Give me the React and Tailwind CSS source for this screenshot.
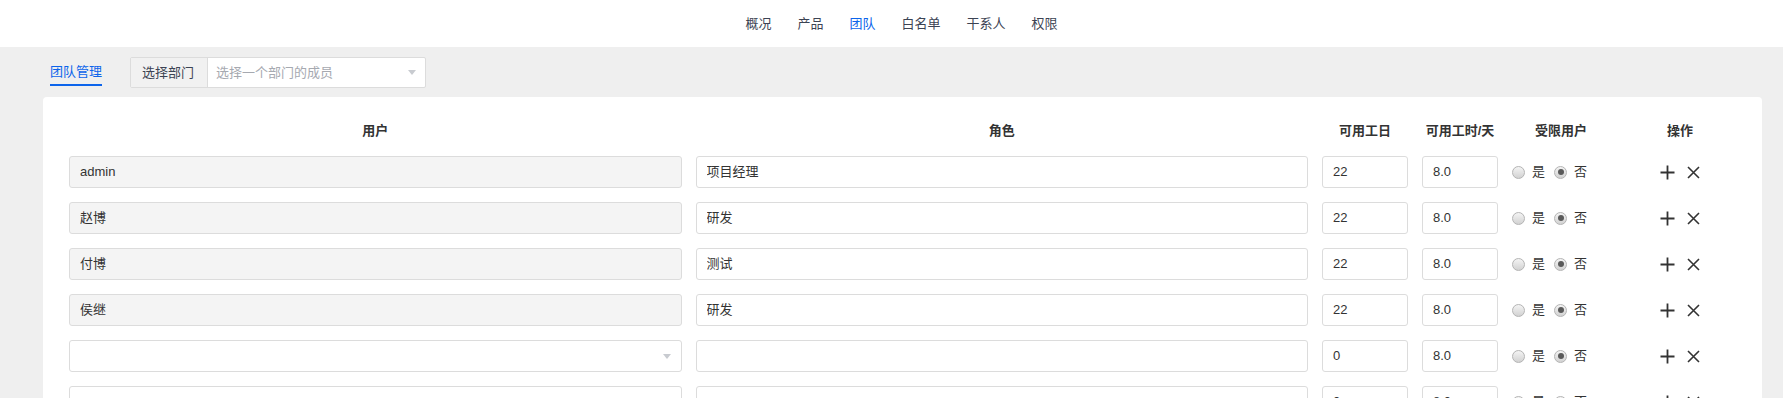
const NAV = ['概况', '产品', '团队', '白名单', '干系人', '权限']

const ROWS = [
  { user: 'admin', role: '项目经理', days: '22', hours: '8.0' },
  { user: '赵博', role: '研发', days: '22', hours: '8.0' },
  { user: '付博', role: '测试', days: '22', hours: '8.0' },
  { user: '侯继', role: '研发', days: '22', hours: '8.0' },
  { user: '', role: '', days: '0', hours: '8.0', select: true },
  { user: '', role: '', days: '0', hours: '8.0', select: true },
]

const FONT = { fontFamily: '"Liberation Sans", "Noto Sans CJK SC", sans-serif' }

function Caret() {
  return (
    <svg width="8" height="5" viewBox="0 0 8 5" className="shrink-0">
      <path d="M0 0h8L4 5z" fill="#c8cbd0" />
    </svg>
  )
}

function Radio({ checked }) {
  return (
    <span className="w-[13px] h-[13px] rounded-full border border-[#b4b4b4] bg-gradient-to-b from-[#f4f4f4] to-[#d2d2d2] flex items-center justify-center">
      {checked && <span className="w-[6px] h-[6px] rounded-full bg-[#5a5a5a]" />}
    </span>
  )
}

function Field({ value, readOnly, select }) {
  return (
    <div
      className={`h-[32px] border border-[#dcdcdc] rounded-[3px] flex items-center pl-[10px] pr-[10px] text-[13px] text-[#333] ${
        readOnly ? 'bg-[#f4f4f4]' : 'bg-white'
      }`}
    >
      <span className="flex-1 truncate">{value}</span>
      {select && <Caret />}
    </div>
  )
}

export default function App() {
  return (
    <div className="min-h-screen bg-[#efefef] text-[#333]" style={FONT}>
      {/* Top nav */}
      <header className="h-[47px] bg-white flex items-center justify-center pl-[20px]">
        <nav className="flex items-center gap-[26px] text-[13px]">
          {NAV.map((item) => (
            <span key={item} className={item === '团队' ? 'text-[#0c64eb]' : 'text-[#3c4353]'}>
              {item}
            </span>
          ))}
        </nav>
      </header>

      {/* Sub toolbar */}
      <div className="pl-[50px] pt-[10px] flex items-start gap-[28px]">
        <div className="h-[29px] flex items-center border-b-2 border-[#0c64eb] text-[13px] text-[#0c64eb] pt-[2px]">
          团队管理
        </div>
        <div className="w-[296px] h-[31px] flex border border-[#dcdcdc] rounded-[2px] bg-white text-[13px]">
          <div className="w-[77px] bg-[#f1f1f1] border-r border-[#dcdcdc] flex items-center pl-[11px] text-[#3c4353]">
            选择部门
          </div>
          <div className="flex-1 flex items-center pl-[8px] pr-[9px] text-[#a6a9b0]">
            <span className="flex-1">选择一个部门的成员</span>
            <Caret />
          </div>
        </div>
      </div>

      {/* Card */}
      <main className="ml-[43px] mr-[21px] mt-[9px] bg-white rounded-[4px] px-[26px] pt-[24px] pb-[20px]">
        <div className="grid grid-cols-[1fr_1fr_86px_76px_98px_112px] gap-x-[14px] gap-y-[14px] items-center text-[13px]">
          {['用户', '角色', '可用工日', '可用工时/天', '受限用户', '操作'].map((h) => (
            <div key={h} className="h-[20px] flex items-center justify-center font-bold text-[#333] whitespace-nowrap mb-[1px]">
              {h}
            </div>
          ))}

          {ROWS.map((r, idx) => (
            <Row key={idx} r={r} />
          ))}
        </div>
      </main>
    </div>
  )
}

function Row({ r }) {
  return (
    <>
      <Field value={r.user} readOnly={!r.select} select={r.select} />
      <Field value={r.role} />
      <Field value={r.days} />
      <Field value={r.hours} />
      <div className="flex items-center text-[13px] text-[#333]">
        <Radio />
        <span className="ml-[7px]">是</span>
        <span className="ml-[9px]"><Radio checked /></span>
        <span className="ml-[7px]">否</span>
      </div>
      <div className="flex items-center justify-center gap-[12px]">
        <svg width="15" height="15" viewBox="0 0 15 15">
          <path d="M7.5 0.5v14M0.5 7.5h14" stroke="#333" strokeWidth="1.8" />
        </svg>
        <svg width="13" height="13" viewBox="0 0 13 13">
          <path d="M1 1l11 11M12 1L1 12" stroke="#333" strokeWidth="1.6" />
        </svg>
      </div>
    </>
  )
}
